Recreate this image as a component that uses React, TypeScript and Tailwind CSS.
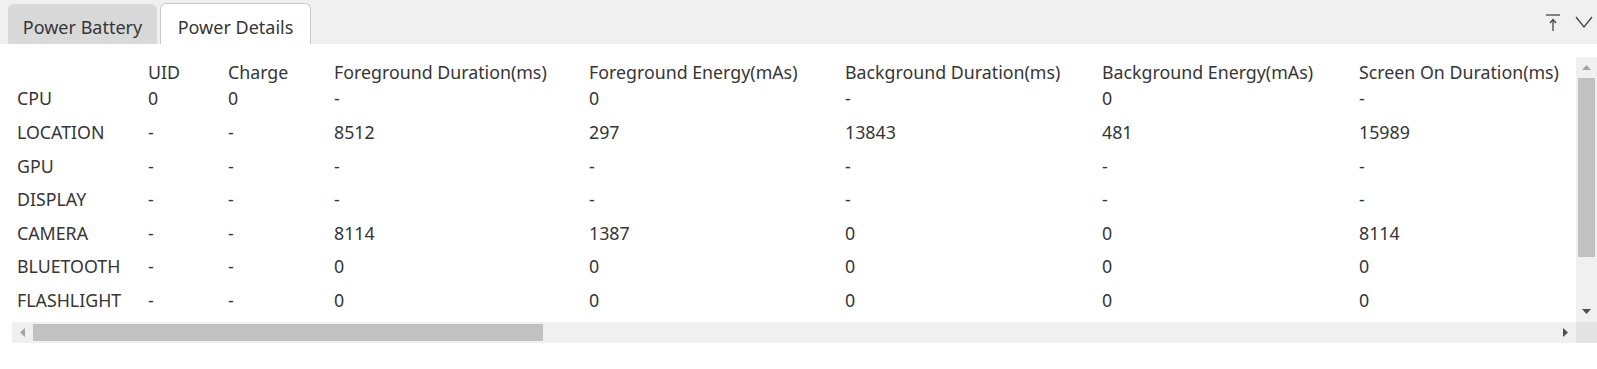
import React from 'react';

const headers = [
  '',
  'UID',
  'Charge',
  'Foreground Duration(ms)',
  'Foreground Energy(mAs)',
  'Background Duration(ms)',
  'Background Energy(mAs)',
  'Screen On Duration(ms)',
];

const rows: string[][] = [
  ['CPU', '0', '0', '-', '0', '-', '0', '-'],
  ['LOCATION', '-', '-', '8512', '297', '13843', '481', '15989'],
  ['GPU', '-', '-', '-', '-', '-', '-', '-'],
  ['DISPLAY', '-', '-', '-', '-', '-', '-', '-'],
  ['CAMERA', '-', '-', '8114', '1387', '0', '0', '8114'],
  ['BLUETOOTH', '-', '-', '0', '0', '0', '0', '0'],
  ['FLASHLIGHT', '-', '-', '0', '0', '0', '0', '0'],
];

const cols = 'grid grid-cols-[131px_80px_106px_255px_256px_257px_257px_300px]';

const App = () => {
  return (
    <div
      className="w-[1597px] h-[369px] bg-white text-[#363636] overflow-hidden"
      style={{ fontFamily: '"Noto Sans", "Open Sans", sans-serif' }}
    >
      {/* Tab bar */}
      <div className="h-[44px] bg-[#f0f0f0] flex items-end pl-[8px]">
        <div className="h-[40px] w-[149px] pt-[6px] bg-[#d9d9d9] rounded-t-[6px] flex items-center justify-center text-[18px]">
          Power Battery
        </div>
        <div className="h-[41px] w-[151px] pt-[6px] ml-[3px] bg-white border border-b-0 border-[#c9c9c9] rounded-t-[6px] flex items-center justify-center text-[18px]">
          Power Details
        </div>
        <div className="flex-1" />
        <div className="self-start flex items-center gap-[14px] pt-[13px] pr-[4px]">
          <svg width="16" height="18" viewBox="0 0 16 18" fill="none" stroke="#444" strokeWidth="1.3">
            <line x1="1" y1="2" x2="15" y2="2" />
            <line x1="8" y1="7" x2="8" y2="18" />
            <path d="M5 10 L8 6.5 L11 10" />
          </svg>
          <svg width="18" height="16" viewBox="0 0 18 16" fill="none" stroke="#444" strokeWidth="1.3">
            <path d="M1 3 L9 13 L17 3" />
          </svg>
        </div>
      </div>

      {/* Panel */}
      <div className="pt-[13px]">
        <div className="flex h-[265px]">
          <div className="flex-1 overflow-hidden pt-[5px] pl-[17px] text-[17.8px]">
            <div className={`${cols} h-[20px] leading-[20px] whitespace-nowrap`}>
              {headers.map((h, i) => (
                <div key={i}>{h}</div>
              ))}
            </div>
            {rows.map((r, ri) => (
              <div key={ri} className={`${cols} h-[33.6px] items-center whitespace-nowrap`}>
                {r.map((c, ci) => (
                  <div key={ci}>{c}</div>
                ))}
              </div>
            ))}
          </div>
          {/* Vertical scrollbar */}
          <div className="w-[21px] bg-[#f0f0f0] flex flex-col">
            <div className="h-[21px] flex items-center justify-center">
              <svg width="9" height="5" viewBox="0 0 9 5">
                <path d="M0 5 L4.5 0 L9 5 Z" fill="#a3a3a3" />
              </svg>
            </div>
            <div className="mx-[2px] h-[179px] bg-[#c1c1c1]" />
            <div className="flex-1" />
            <div className="h-[21px] flex items-center justify-center">
              <svg width="9" height="5" viewBox="0 0 9 5">
                <path d="M0 0 L4.5 5 L9 0 Z" fill="#505050" />
              </svg>
            </div>
          </div>
        </div>

        {/* Horizontal scrollbar */}
        <div className="flex h-[21px]">
          <div className="flex-1 ml-[12px] bg-[#f0f0f0] flex items-center">
            <div className="w-[21px] h-full flex items-center justify-center">
              <svg width="5" height="9" viewBox="0 0 5 9">
                <path d="M5 0 L0 4.5 L5 9 Z" fill="#a3a3a3" />
              </svg>
            </div>
            <div className="h-[17px] w-[510px] bg-[#c1c1c1]" />
            <div className="flex-1" />
            <div className="w-[21px] h-full flex items-center justify-center">
              <svg width="5" height="9" viewBox="0 0 5 9">
                <path d="M0 0 L5 4.5 L0 9 Z" fill="#505050" />
              </svg>
            </div>
          </div>
          <div className="w-[21px] bg-[#e3e3e3]" />
        </div>
      </div>
    </div>
  );
};

export default App;
